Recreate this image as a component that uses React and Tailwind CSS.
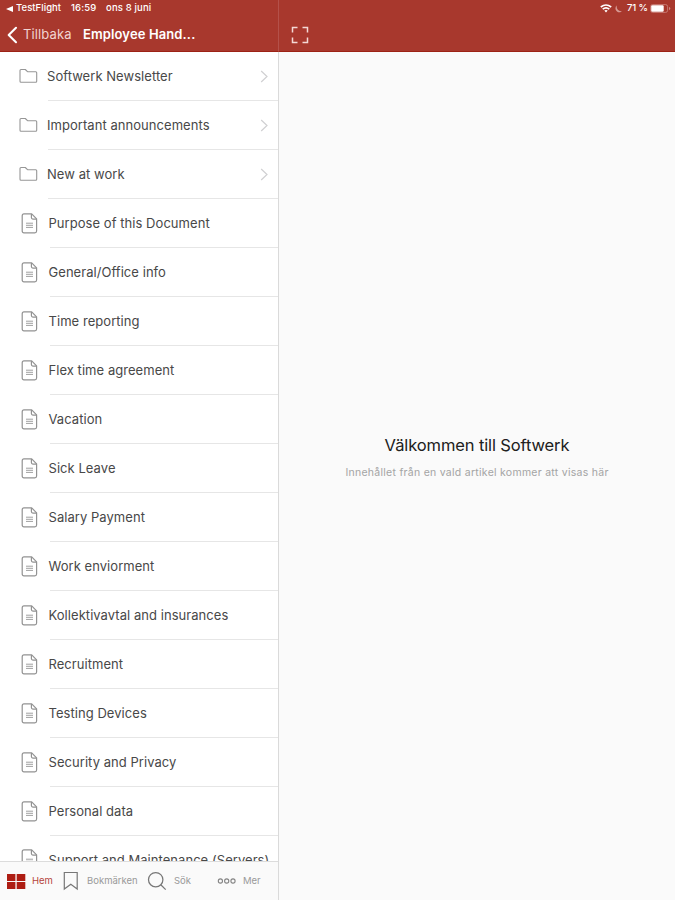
const folders = ["Softwerk Newsletter", "Important announcements", "New at work"];
const documents = [
  "Purpose of this Document",
  "General/Office info",
  "Time reporting",
  "Flex time agreement",
  "Vacation",
  "Sick Leave",
  "Salary Payment",
  "Work enviorment",
  "Kollektivavtal and insurances",
  "Recruitment",
  "Testing Devices",
  "Security and Privacy",
  "Personal data",
  "Support and Maintenance (Servers)",
];

function FolderIcon() {
  return (
    <svg className="h-[16px] w-[19px]" viewBox="0 0 19 16" fill="none" stroke="#969696" strokeWidth="1.1" strokeLinejoin="round">
      <path d="M1 13.2V2.5Q1 1.5 2 1.5H6.3L8.5 3.7H16.8Q17.7 3.7 17.7 4.7V13.2Q17.7 14.2 16.7 14.2H2Q1 14.2 1 13.2Z" />
    </svg>
  );
}

function DocumentIcon() {
  return (
    <svg className="h-[21px] w-[17px]" viewBox="0 0 17 21" fill="none" stroke="#929292" strokeWidth="1.2" strokeLinejoin="round">
      <path d="M3 .9H10.7L15.6 5.8V18Q15.6 19.8 13.8 19.8H3Q1.2 19.8 1.2 18V2.7Q1.2 .9 3 .9Z" />
      <path d="M10.4 1V4.6Q10.4 6.1 11.9 6.1H15.5" />
      <path d="M5 10.2H12M5 12.3H12M5 14.4H12" strokeWidth="1" stroke="#a0a0a0" />
    </svg>
  );
}

function Row({ label, folder }) {
  return (
    <div className="flex h-[48.97px] shrink-0 items-stretch">
      <div className={folder ? "flex w-[47px] items-center pl-[19px]" : "flex w-[48.5px] items-center pl-[21px]"}>
        {folder ? <FolderIcon /> : <DocumentIcon />}
      </div>
      <div className={folder ? "relative flex flex-1 items-center justify-between pr-[9px]" : "relative flex flex-1 items-center"}>
        <span className="whitespace-nowrap pt-[1px] text-[13px] tracking-[0.05px] text-[#484848]">{label}</span>
        {folder && (
          <svg className="h-[13px] w-[9px]" viewBox="0 0 9 13" fill="none" stroke="#d0d0d2" strokeWidth="1.2">
            <path d="M1.2 1 7 6.5 1.2 12" />
          </svg>
        )}
        <div className="absolute bottom-[-0.5px] left-px right-0 h-px bg-[#e6e6e6]" />
      </div>
    </div>
  );
}

function StatusIcons() {
  return (
    <div className="flex h-[17px] items-center pr-[4px] text-white">
      <svg className="h-[9px] w-[12px]" viewBox="0 0 12 9" fill="none" stroke="#fff" strokeWidth="1.7">
        <path d="M.8 3Q6-1 11.2 3M2.7 5.2Q6 2.5 9.3 5.2" />
        <path d="M4.3 6.6Q6 5.4 7.7 6.6L6 8.4Z" fill="#fff" stroke="none" />
      </svg>
      <svg className="ml-[3px] h-[8px] w-[7px]" viewBox="0 0 7 8" fill="#d69a94">
        <path d="M1.7.3C-.2 2.2.2 5.1 2 6.5 3.6 7.8 5.9 7.6 6.8 6.2 3.5 6.7 1.2 4 1.7.3Z" />
      </svg>
      <span className="ml-[5px] w-[23px] whitespace-nowrap text-[9.5px] font-medium tracking-[-0.1px]">71 %</span>
      <svg className="h-[9px] w-[21px]" viewBox="0 0 21 9" fill="none">
        <rect x=".6" y=".6" width="17" height="7.8" rx="2" stroke="#cf8982" strokeWidth=".8" />
        <rect x="1.2" y="1.2" width="12.5" height="6.6" rx="1.2" fill="#fff" />
        <path d="M19 3V6Q20.3 5.7 20.3 4.5T19 3Z" fill="#cf8982" />
      </svg>
    </div>
  );
}

function TabBar() {
  return (
    <nav className="flex h-[39px] shrink-0 items-center border-t border-[#dcdcdc] bg-[#fafafa] text-[9.5px] text-[#999]">
      <div className="flex w-[62px] items-center pl-[7px] text-[#b5453c]">
        <svg className="h-[17px] w-[19px]" viewBox="0 0 19 17" fill="#ae1d13">
          <path d="M0 1H8.4V7.9H0ZM9.7 1H18.3V7.9H9.7ZM0 9.1H8.4V16H0ZM9.7 9.1H18.3V16H9.7Z" />
        </svg>
        <span className="ml-[6px]">Hem</span>
      </div>
      <div className="flex w-[85px] items-center">
        <svg className="h-[20px] w-[17px]" viewBox="0 0 17 20" fill="none" stroke="#777" strokeWidth="1.2">
          <path d="M2.3 1.5H15.2V18L8.8 13.3 2.3 18Z" />
        </svg>
        <span className="ml-[8px] whitespace-nowrap">Bokmärken</span>
      </div>
      <div className="flex w-[70px] items-center">
        <svg className="h-[20px] w-[20px]" viewBox="0 0 20 20" fill="none" stroke="#777" strokeWidth="1.25">
          <circle cx="8.7" cy="8.7" r="7.2" />
          <path d="M13.8 13.8 18.7 18.6" />
        </svg>
        <span className="ml-[7px]">Sök</span>
      </div>
      <div className="flex items-center">
        <svg className="h-[8px] w-[19px]" viewBox="0 0 19 8" fill="none" stroke="#858585" strokeWidth="1.1">
          <circle cx="3.4" cy="4" r="2.1" />
          <circle cx="9.7" cy="4" r="2.1" />
          <circle cx="16" cy="4" r="2.1" />
        </svg>
        <span className="ml-[7px]">Mer</span>
      </div>
    </nav>
  );
}

export default function App() {
  return (
    <div className="flex h-[900px] w-[675px] overflow-hidden bg-[#fafafa] font-['Inter','Liberation_Sans',sans-serif]">
      <aside className="flex w-[279px] shrink-0 flex-col">
        <header className="h-[52px] shrink-0 border-b border-r border-b-[#9d2215] border-r-[#b4514a] bg-[#a8382d] text-white">
          <div className="flex h-[17px] items-center pl-[6px] text-[9.5px] font-medium">
            <svg className="h-[6px] w-[7px]" viewBox="0 0 7 6" fill="#fff"><path d="M0 3 7 0V6Z" /></svg>
            <span className="ml-[3px] w-[55px] tracking-[0.05px]">TestFlight</span>
            <span className="w-[35px] tracking-[0.15px]">16:59</span>
            <span className="tracking-[0.15px]">ons 8 juni</span>
          </div>
          <div className="flex h-[35px] items-center pl-[7px] text-[13px]">
            <svg className="h-[18px] w-[11px]" viewBox="0 0 11 18" fill="none" stroke="#fff" strokeWidth="2.1" strokeLinecap="round" strokeLinejoin="round"><path d="M9 1.8 1.7 9 9 16.2" /></svg>
            <span className="ml-[5px] w-[60px] whitespace-nowrap pt-px tracking-[0.12px] text-[#f1d4d1]">Tillbaka</span>
            <span className="whitespace-nowrap pt-px font-semibold tracking-[0.12px]">Employee Hand...</span>
          </div>
        </header>
        <div className="flex min-h-0 flex-1 flex-col border-r border-[#dadada] bg-white">
          <div className="flex min-h-0 flex-1 flex-col overflow-hidden">
            {folders.map((label) => <Row key={label} label={label} folder />)}
            {documents.map((label) => <Row key={label} label={label} />)}
          </div>
          <TabBar />
        </div>
      </aside>
      <main className="flex flex-1 flex-col">
        <header className="h-[52px] shrink-0 border-b border-[#9d2215] bg-[#a8382d]">
          <div className="flex justify-end"><StatusIcons /></div>
          <div className="flex h-[35px] items-center pl-[12px]">
            <svg className="h-[18px] w-[18px]" viewBox="0 0 18 18" fill="none" stroke="#f4d8d5" strokeWidth="1.5">
              <path d="M1.5 6.5V1.5H6.5M11.5 1.5H16.5V6.5M16.5 11.5V16.5H11.5M6.5 16.5H1.5V11.5" />
            </svg>
          </div>
        </header>
        <section className="flex flex-1 flex-col items-center pt-[381px]">
          <h1 className="whitespace-nowrap text-[16.5px] leading-[24px] tracking-[-0.12px] text-[#202020]">Välkommen till Softwerk</h1>
          <p className="mt-[8px] whitespace-nowrap text-[10.5px] leading-[16px] tracking-[0.27px] text-[#a4a4a4]">Innehållet från en vald artikel kommer att visas här</p>
        </section>
      </main>
    </div>
  );
}
